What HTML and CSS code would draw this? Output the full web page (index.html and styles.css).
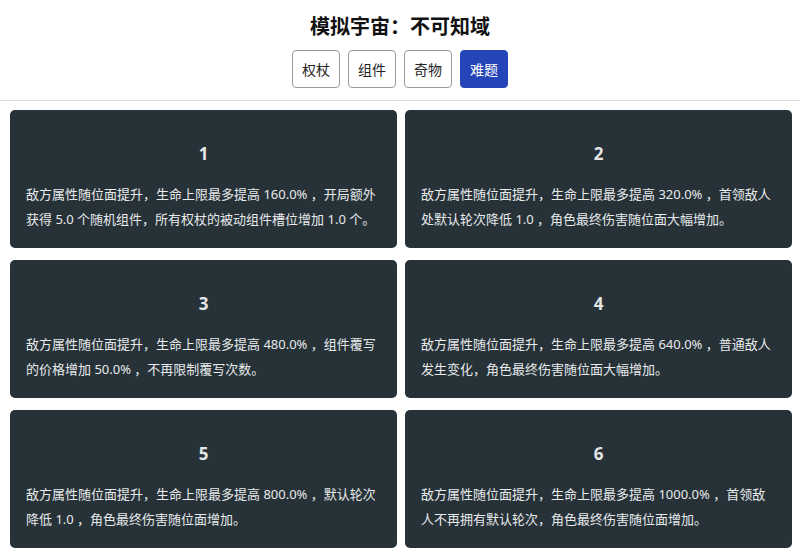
FILE: index.html
```html
<!DOCTYPE html>
<html lang="zh-CN">
<head>
<meta charset="utf-8">
<title>模拟宇宙：不可知域</title>
<link rel="stylesheet" href="styles.css">
</head>
<body>
<header class="header">
  <h1 class="title">模拟宇宙：不可知域</h1>
  <nav class="tabs">
    <button class="tab">权杖</button>
    <button class="tab">组件</button>
    <button class="tab">奇物</button>
    <button class="tab active">难题</button>
  </nav>
</header>
<main class="grid">
  <section class="card">
    <h2 class="num">1</h2>
    <p class="desc">敌方属性随位面提升，生命上限最多提高 160.0% ，开局额外获得 5.0 个随机组件，所有权杖的被动组件槽位增加 1.0 个。</p>
  </section>
  <section class="card">
    <h2 class="num">2</h2>
    <p class="desc">敌方属性随位面提升，生命上限最多提高 320.0% ，首领敌人处默认轮次降低 1.0 ，角色最终伤害随位面大幅增加。</p>
  </section>
  <section class="card">
    <h2 class="num">3</h2>
    <p class="desc">敌方属性随位面提升，生命上限最多提高 480.0% ，组件覆写的价格增加 50.0% ，不再限制覆写次数。</p>
  </section>
  <section class="card">
    <h2 class="num">4</h2>
    <p class="desc">敌方属性随位面提升，生命上限最多提高 640.0% ，普通敌人发生变化，角色最终伤害随位面大幅增加。</p>
  </section>
  <section class="card">
    <h2 class="num">5</h2>
    <p class="desc">敌方属性随位面提升，生命上限最多提高 800.0% ，默认轮次降低 1.0 ，角色最终伤害随位面增加。</p>
  </section>
  <section class="card">
    <h2 class="num">6</h2>
    <p class="desc">敌方属性随位面提升，生命上限最多提高 1000.0% ，首领敌人不再拥有默认轮次，角色最终伤害随位面增加。</p>
  </section>
</main>
</body>
</html>
```

FILE: styles.css
```css
* { box-sizing: border-box; }
html, body {
  margin: 0;
  padding: 0;
  background: #ffffff;
  font-family: "Noto Sans", "Noto Sans CJK SC", sans-serif;
}
.header {
  padding-top: 12px;
  height: 101px;
  border-bottom: 1px solid #dcdcdc;
  text-align: center;
}
.title {
  margin: 0;
  font-size: 20px;
  line-height: 30px;
  font-weight: 700;
  color: #111;
}
.tabs {
  margin-top: 8px;
  display: flex;
  justify-content: center;
  gap: 8px;
}
.tab {
  width: 48px;
  height: 38px;
  padding: 0;
  font-family: "Noto Sans", "Noto Sans CJK SC", sans-serif;
  font-size: 14px;
  color: #222;
  background: #fff;
  border: 1px solid #9a9a9a;
  border-radius: 4px;
}
.tab.active {
  background: #2345b8;
  border-color: #2345b8;
  color: #fff;
}
.grid {
  display: grid;
  grid-template-columns: 1fr 1fr;
  column-gap: 8px;
  row-gap: 12px;
  padding: 9px 8px 8px 10px;
}
.card {
  background: #263238;
  border-radius: 5px;
  padding: 16px;
  height: 138px;
}
.num {
  margin: 16px 0 16px;
  text-align: center;
  font-size: 17px;
  line-height: 24px;
  font-weight: 700;
  color: #e4e6e7;
}
.desc {
  margin: 0;
  font-size: 13px;
  line-height: 25px;
  color: #e8eaeb;
}
```
